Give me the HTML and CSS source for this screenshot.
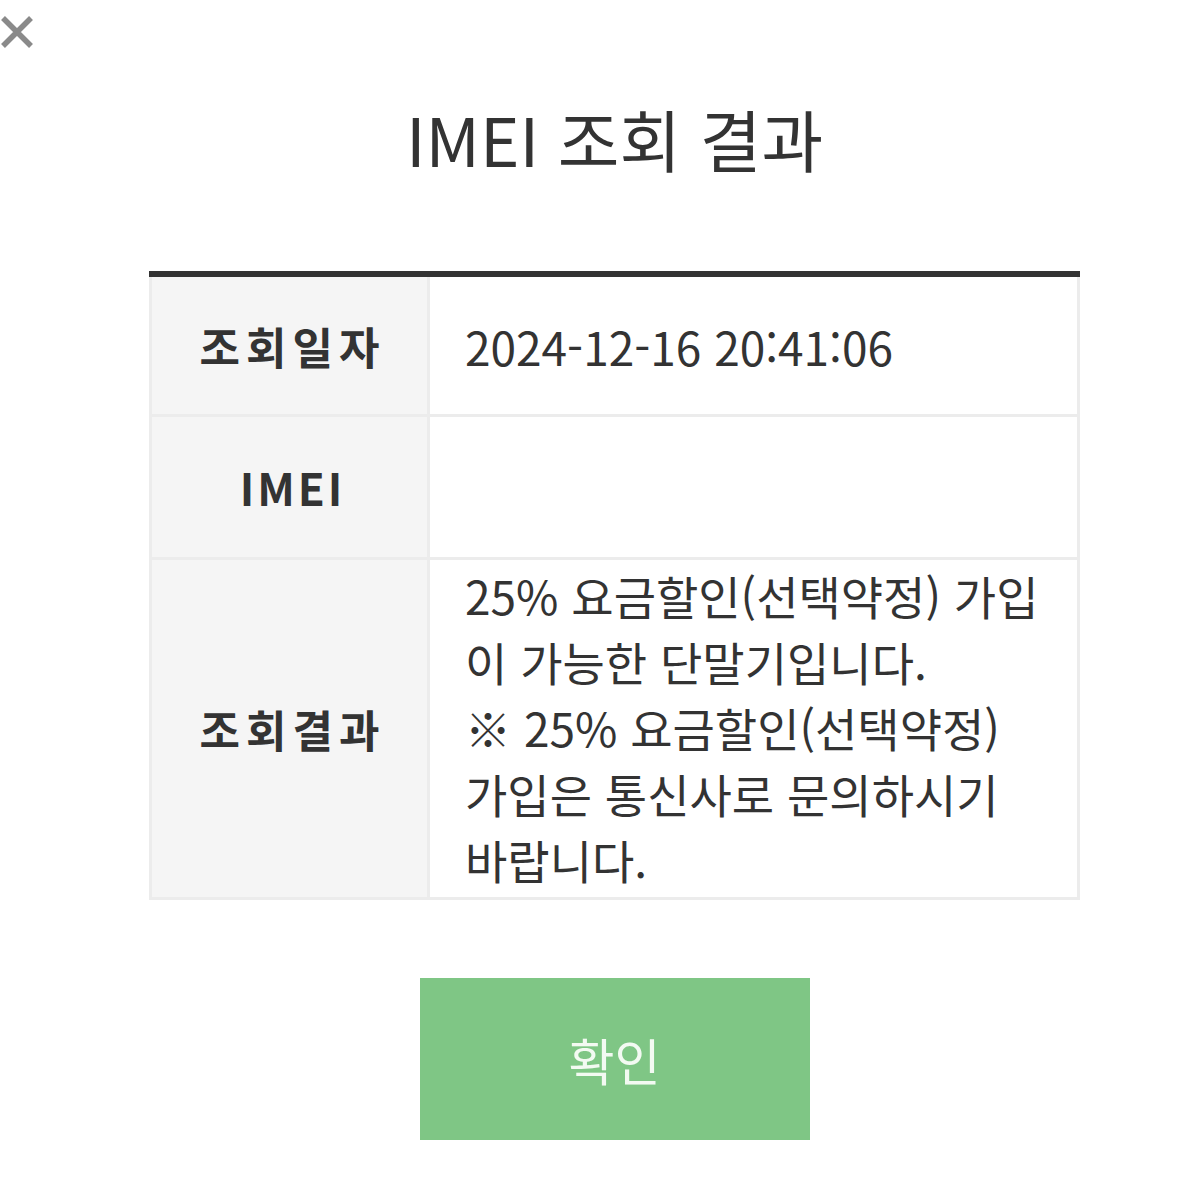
FILE: index.html
```html
<!DOCTYPE html>
<html lang="ko">
<head>
    <meta charset="UTF-8">
    <meta name="viewport" content="width=device-width, initial-scale=1.0">
    <title>IMEI 조회 결과</title>
    <link rel="stylesheet" href="styles.css">
</head>
<body>
    <div class="close-bar">
        <button class="close-btn" aria-label="닫기">
            <svg width="34" height="34" viewBox="0 0 34 34">
                <path d="M3 3 L31 31 M31 3 L3 31" stroke="#8a8a8a" stroke-width="5.5" stroke-linecap="butt"/>
            </svg>
        </button>
    </div>

    <div class="popup">
        <h1 class="title">IMEI 조회 결과</h1>

        <table class="result-table">
            <tr>
                <th>조회일자</th>
                <td>2024-12-16 20:41:06</td>
            </tr>
            <tr class="imei-row">
                <th class="latin">IMEI</th>
                <td></td>
            </tr>
            <tr class="result-row">
                <th>조회결과</th>
                <td>25% 요금할인(선택약정) 가입<br>이 가능한 단말기입니다.<br>※ 25% 요금할인(선택약정)<br>가입은 통신사로 문의하시기<br>바랍니다.</td>
            </tr>
        </table>

        <div class="actions">
            <button class="button">확인</button>
        </div>
    </div>
</body>
</html>
```

FILE: styles.css
```css
body {
    margin: 0;
    background-color: #ffffff;
    font-family: "Noto Sans CJK KR", "Noto Sans", sans-serif;
    color: #333333;
}
.close-bar {
    height: 0;
}
.close-btn {
    display: block;
    margin: 0;
    padding: 0;
    border: none;
    background: none;
    cursor: pointer;
    margin-top: 15px;
    margin-left: 0;
    width: 34px;
    height: 34px;
}
.close-btn svg {
    display: block;
}
.popup {
    width: 931px;
    margin-left: 149px;
    padding-top: 83px;
}
.title {
    margin: 0;
    font-size: 67px;
    font-weight: 400;
    line-height: 80px;
    text-align: center;
    color: #333333;
}
.result-table {
    width: 100%;
    margin-top: 93px;
    border-collapse: collapse;
    border-top: 6px solid #333333;
}
.result-table th,
.result-table td {
    border: 3px solid #ececec;
    height: 133px;
    padding: 2px 36px 2px 35px;
    font-size: 46px;
    line-height: 66px;
}
.result-table th {
    width: 269px;
    padding: 2px 0 2px 6px;
    background-color: #f5f5f5;
    font-size: 44px;
    font-weight: 700;
    letter-spacing: 6px;
    text-align: center;
    color: #333333;
}
.result-table th.latin {
    letter-spacing: 3px;
}
.result-table td {
    text-align: left;
    color: #333333;
    background-color: #ffffff;
}
.imei-row th,
.imei-row td {
    height: 136px;
}
.result-row td {
    padding-bottom: 5px;
}
.actions {
    display: flex;
    justify-content: center;
    margin-top: 78px;
}
.button {
    width: 390px;
    height: 162px;
    border: none;
    background-color: #7fc685;
    color: #f3faf2;
    font-family: "Noto Sans CJK KR", "Noto Sans", sans-serif;
    font-size: 50px;
    cursor: pointer;
}
.button:hover {
    background-color: #74bd7a;
}
```
